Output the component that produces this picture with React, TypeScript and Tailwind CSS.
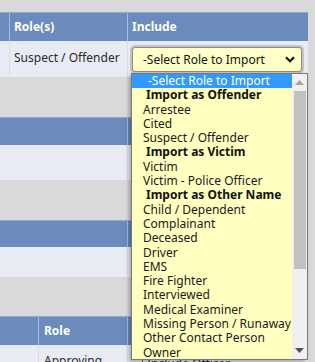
import React from "react";

const options: { label: string; kind: "sel" | "group" | "opt" }[] = [
  { label: "-Select Role to Import", kind: "sel" },
  { label: "Import as Offender", kind: "group" },
  { label: "Arrestee", kind: "opt" },
  { label: "Cited", kind: "opt" },
  { label: "Suspect / Offender", kind: "opt" },
  { label: "Import as Victim", kind: "group" },
  { label: "Victim", kind: "opt" },
  { label: "Victim - Police Officer", kind: "opt" },
  { label: "Import as Other Name", kind: "group" },
  { label: "Child / Dependent", kind: "opt" },
  { label: "Complainant", kind: "opt" },
  { label: "Deceased", kind: "opt" },
  { label: "Driver", kind: "opt" },
  { label: "EMS", kind: "opt" },
  { label: "Fire Fighter", kind: "opt" },
  { label: "Interviewed", kind: "opt" },
  { label: "Medical Examiner", kind: "opt" },
  { label: "Missing Person / Runaway", kind: "opt" },
  { label: "Other Contact Person", kind: "opt" },
  { label: "Owner", kind: "opt" },
];

function Chevron() {
  return (
    <svg width="10" height="7" viewBox="0 0 10 7">
      <path d="M1 1.2 L5 5.2 L9 1.2" fill="none" stroke="#111" strokeWidth="2.2" />
    </svg>
  );
}

export default function App() {
  return (
    <div
      className="relative w-[315px] h-[362px] overflow-hidden bg-[#d9d9d9] text-[12px] text-[#333]"
      style={{ fontFamily: "'Noto Sans', 'DejaVu Sans', sans-serif" }}
    >
      <div className="flex flex-col w-[308px] pt-[12px]">
        {/* Table 1 */}
        <div className="border-t border-[#8eaadc]">
          <div className="flex h-[28px] bg-[#6a8bbb] text-white font-bold">
            <div className="w-[10px] border-r border-[#a6bbe0]" />
            <div className="w-[118px] border-r border-[#a6bbe0] pl-[4px] flex items-center">Role(s)</div>
            <div className="flex-1 pl-[4px] flex items-center">Include</div>
          </div>
          <div className="flex h-[36px] bg-[#e8ebf4]">
            <div className="w-[10px] border-r border-[#dadde6]" />
            <div className="w-[118px] border-r border-[#dadde6] pl-[4px] pt-[8px] text-[#2a2a2a]">Suspect / Offender</div>
            <div className="flex-1 pl-[4px] pt-[6px]">
              <div className="w-[170px] h-[25px] rounded-[3px] border border-[#8a8a8a] bg-[#ffffc8] shadow-[0_0_0_2px_#c4c4c4] flex items-center justify-between pl-[10px] pr-[6px] text-[#111]">
                <span>-Select Role to Import</span>
                <Chevron />
              </div>
            </div>
          </div>
        </div>
        <div className="h-[40px]" />
        {/* Table 2 */}
        <div className="border-t border-[#8eaadc]">
          <div className="flex h-[27px] bg-[#6a8bbb]">
            <div className="w-[128px] border-r border-[#a6bbe0]" />
            <div className="flex-1" />
          </div>
          <div className="flex h-[35px] bg-[#e8ebf4]">
            <div className="w-[128px] border-r border-[#dadde6]" />
            <div className="flex-1" />
          </div>
        </div>
        <div className="h-[40px]" />
        {/* Table 3 */}
        <div className="border-t border-[#8eaadc]">
          <div className="flex h-[26px] bg-[#6a8bbb]">
            <div className="w-[128px] border-r border-[#a6bbe0]" />
            <div className="flex-1" />
          </div>
          <div className="flex h-[30px] bg-[#e8ebf4]">
            <div className="w-[128px] border-r border-[#dadde6]" />
            <div className="flex-1" />
          </div>
        </div>
        <div className="h-[39px]" />
        {/* Table 4 */}
        <div className="border-t border-[#8eaadc]">
          <div className="flex h-[28px] bg-[#6a8bbb] text-white font-bold">
            <div className="w-[39px] border-r border-[#a6bbe0]" />
            <div className="w-[89px] border-r border-[#a6bbe0] pl-[5px] flex items-center">Role</div>
            <div className="flex-1" />
          </div>
          <div className="flex h-[40px] bg-[#e8ebf4]">
            <div className="w-[39px] border-r border-[#dadde6]" />
            <div className="w-[89px] border-r border-[#dadde6] pl-[5px] pt-[7px] text-[#2a2a2a]">Approving</div>
            <div className="flex-1 pl-[14px] pt-[10px]">
              <div className="border-l border-[#666] pl-[4px] text-[#1d2a5a]">Include Officer</div>
            </div>
          </div>
        </div>
      </div>

      {/* Open dropdown list */}
      <div className="absolute left-[131px] top-[73px] w-[177px] h-[287px] bg-[#ffffc0] border border-[#7a7a7a] shadow-[-2px_2px_4px_rgba(0,0,0,0.3)] flex">
        <div className="flex-1 flex flex-col">
          {options.map((o) => (
            <div
              key={o.label}
              className={
                o.kind === "sel"
                  ? "h-[14.3px] leading-[14.3px] bg-[#3399ff] text-white pl-[16px] whitespace-nowrap"
                  : o.kind === "group"
                  ? "h-[14.3px] leading-[14.3px] font-bold text-[#111] pl-[14px] whitespace-nowrap"
                  : "h-[14.3px] leading-[14.3px] text-[#1a1a1a] pl-[11px] whitespace-nowrap"
              }
            >
              {o.label}
            </div>
          ))}
        </div>
        <div className="w-[15px] bg-[#f0f0f0] flex flex-col items-center">
          <div className="h-[17px] flex items-center justify-center">
            <svg width="9" height="5" viewBox="0 0 9 5"><path d="M0 5 L4.5 0 L9 5 Z" fill="#a3a3a3" /></svg>
          </div>
          <div className="w-[12px] h-[178px] bg-[#c1c1c1]" />
          <div className="flex-1" />
          <div className="h-[17px] flex items-center justify-center">
            <svg width="9" height="5" viewBox="0 0 9 5"><path d="M0 0 L4.5 5 L9 0 Z" fill="#505050" /></svg>
          </div>
        </div>
      </div>
    </div>
  );
}
